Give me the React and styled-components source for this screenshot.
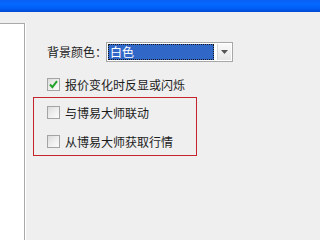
import React from "react";
import styled, { createGlobalStyle } from "styled-components";

const Global = createGlobalStyle`
  html, body { margin: 0; padding: 0; background: #efefef; }
  body { font-family: "Noto Sans CJK SC", "Noto Sans", sans-serif; }
`;

const Page = styled.div`
  width: 100%;
  min-width: 280px;
  height: 100vh;
  min-height: 229px;
  overflow: hidden;
  display: flex;
  flex-direction: column;
  background: #efefef;
`;

const TitleBar = styled.div`
  height: 12px;
  flex: none;
  background: linear-gradient(#0a5ff2 0%, #0468ff 35%, #005ef6 70%, #0048d0 100%);
`;

const Body = styled.div`
  flex: 1;
  display: flex;
`;

const SidePanel = styled.div`
  width: 24px;
  margin-top: 11px;
  background: #ffffff;
  border-top: 1px solid #a9a9a9;
  border-right: 1px solid #a9a9a9;
  box-shadow: 1px 0 0 #ffffff;
  flex: none;
`;

const Content = styled.div`
  flex: 1;
  display: flex;
  flex-direction: column;
  padding-top: 30px;
  font-size: 12px;
  color: #1c1c1c;
`;

const FieldRow = styled.div`
  display: flex;
  align-items: center;
  height: 20px;
  padding-left: 22px;
`;

const Label = styled.span`
  width: 59px;
  line-height: 14px;
  white-space: nowrap;
`;

const Select = styled.div`
  width: 123px;
  height: 16px;
  border: 1px solid #a7a7a7;
  background: #ffffff;
  display: flex;
  align-items: stretch;
  padding: 1px;
  box-sizing: content-box;
`;

const SelectValue = styled.div`
  flex: 1;
  background: #3168c8;
  outline: 1px dotted #1a1a1a;
  outline-offset: -1px;
  color: #ffffff;
  line-height: 16px;
  padding-left: 2px;
  margin-right: 3px;
`;

const DropButton = styled.div`
  width: 13px;
  background: linear-gradient(#fafafa, #e6e6e6);
  border-left: 1px solid #d6d6d6;
  display: flex;
  align-items: center;
  justify-content: center;
`;

const CheckRow = styled.label`
  display: flex;
  align-items: center;
  height: 14px;
  padding-left: ${(p) => p.$indent}px;
  margin-top: ${(p) => p.$top || 0}px;
  gap: 5px;
  white-space: nowrap;
`;

const Box = styled.span`
  width: 11px;
  height: 11px;
  flex: none;
  border: 1px solid #a4a4a4;
  background: linear-gradient(135deg, #dcdcdc 0%, #f0f0f0 55%, #fbfbfb 100%);
  display: flex;
  align-items: center;
  justify-content: center;
`;

const GroupBox = styled.div`
  margin-top: 6px;
  margin-left: 8px;
  width: 162px;
  border: 1px solid #c4242c;
  padding: 7px 0 7px;
  display: flex;
  flex-direction: column;
  gap: 15px;
`;

const Check = ({ checked }) => (
  <Box>
    {checked && (
      <svg width="9" height="9" viewBox="0 0 9 9">
        <path d="M1 4.5 L3.4 7.2 L8 1.2" fill="none" stroke="#22a22a" strokeWidth="2" />
      </svg>
    )}
  </Box>
);

export default function App() {
  return (
    <Page>
      <Global />
      <TitleBar />
      <Body>
        <SidePanel />
        <Content>
          <FieldRow>
            <Label>背景颜色：</Label>
            <Select>
              <SelectValue>白色</SelectValue>
              <DropButton>
                <svg width="7" height="4" viewBox="0 0 7 4">
                  <path d="M0 0 H7 L3.5 4 Z" fill="#555" />
                </svg>
              </DropButton>
            </Select>
          </FieldRow>
          <CheckRow $indent={22} $top={15}>
            <Check checked />
            <span>报价变化时反显或闪烁</span>
          </CheckRow>
          <GroupBox>
            <CheckRow $indent={13}>
              <Check />
              <span>与博易大师联动</span>
            </CheckRow>
            <CheckRow $indent={13}>
              <Check />
              <span>从博易大师获取行情</span>
            </CheckRow>
          </GroupBox>
        </Content>
      </Body>
    </Page>
  );
}
